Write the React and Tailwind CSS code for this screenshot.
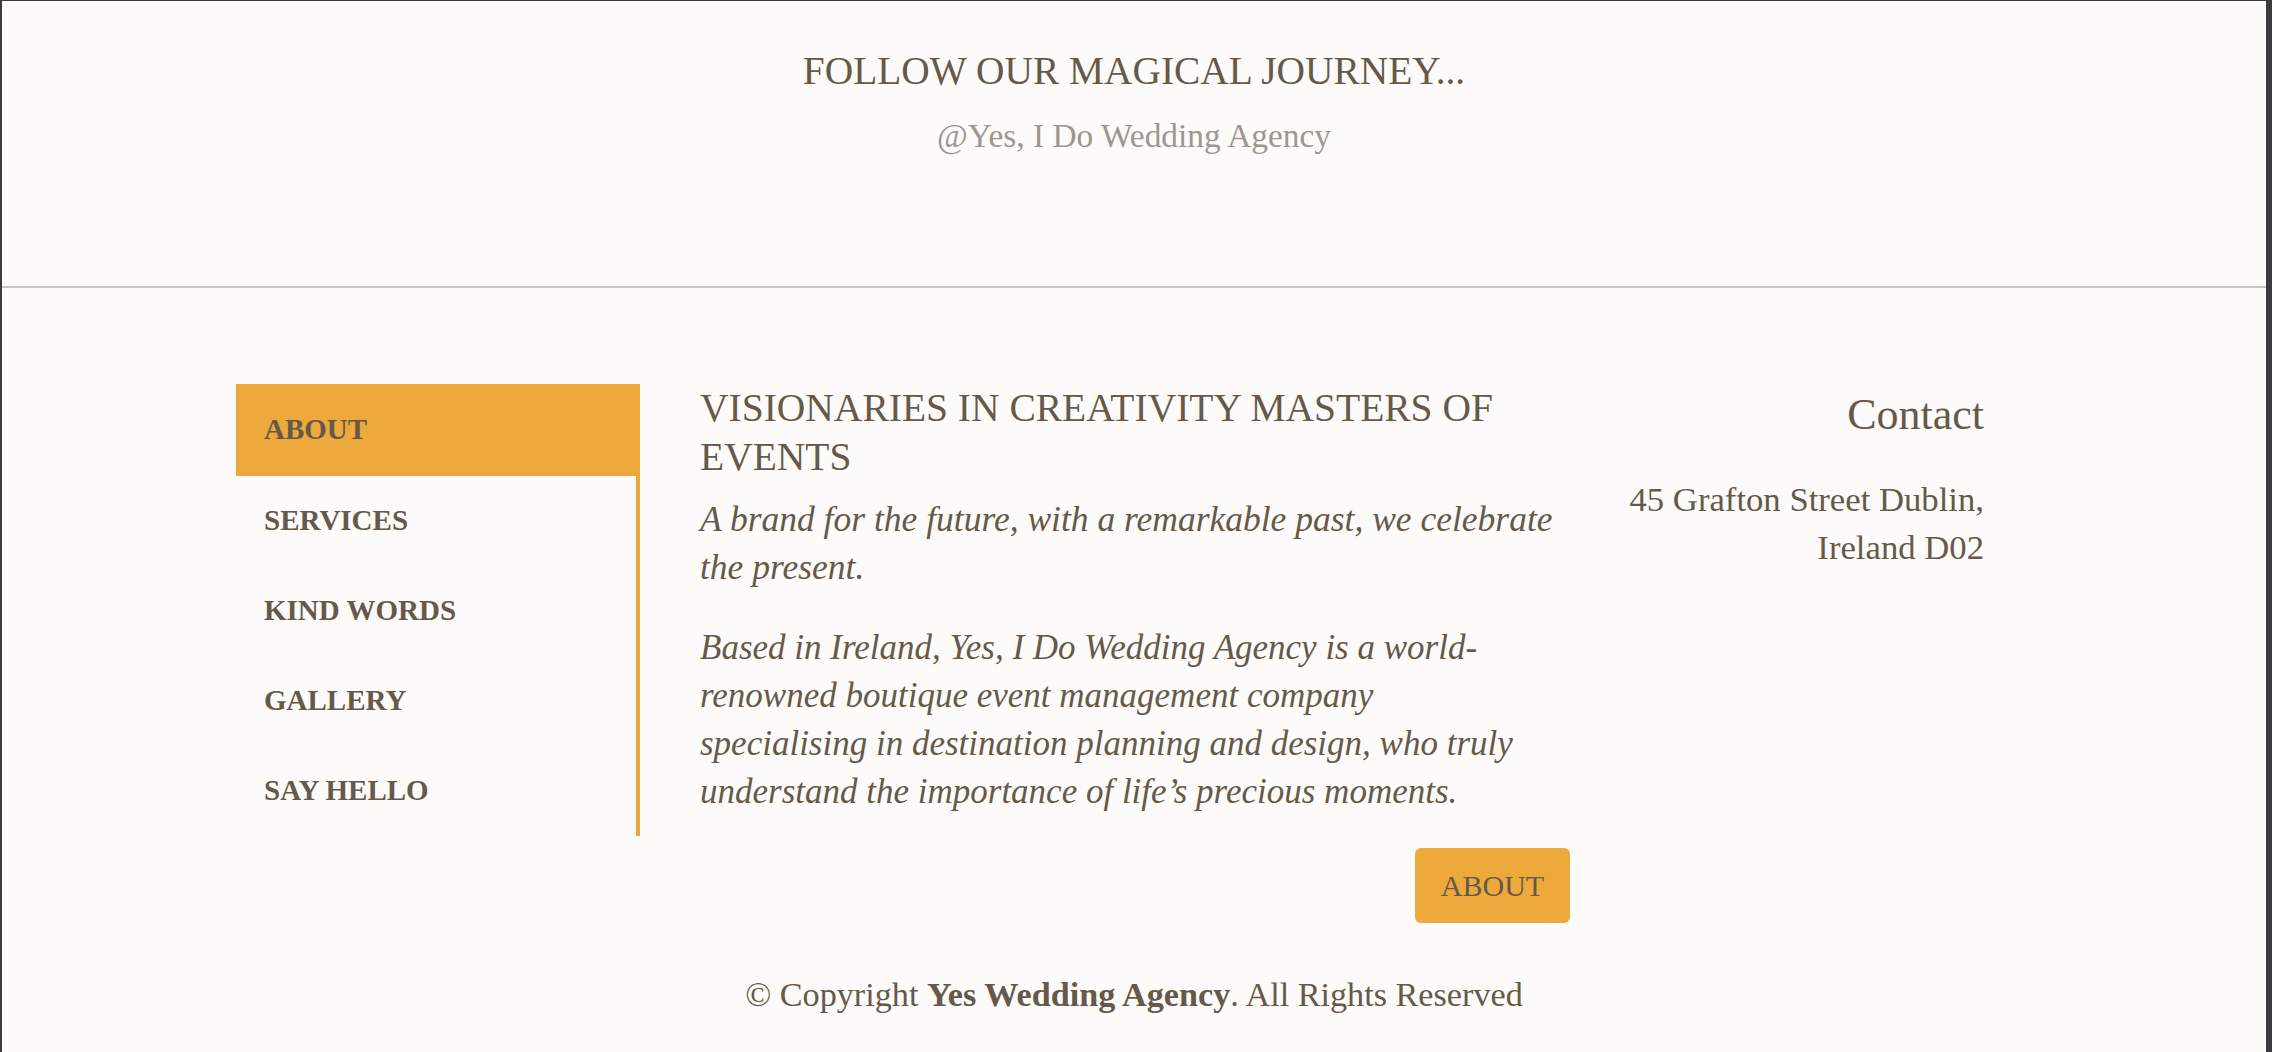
import React from 'react';

const navItems = ['ABOUT', 'SERVICES', 'KIND WORDS', 'GALLERY', 'SAY HELLO'];

const App = () => {
  const active = 'ABOUT';

  return (
    <div className="min-h-screen bg-[#fcfbf9] border-t border-l-2 border-r-[6px] border-[#3b3b3d] font-['Liberation_Serif',serif] text-[#66594a]">
      {/* Instagram strip */}
      <section className="h-[287px] pt-[47px] text-center border-b-2 border-[#c6c5c3]">
        <h2 className="text-[39.4px] leading-[1.2]">FOLLOW OUR MAGICAL JOURNEY...</h2>
        <p className="mt-[21px] text-[33.4px] leading-[1.2] text-[#9c978f]">@Yes, I Do Wedding Agency</p>
      </section>

      {/* Footer */}
      <footer className="pt-[96px]">
        <div className="flex pl-[234px] pr-[282px]">
          <nav className="w-[404px] shrink-0">
            {navItems.map((item) =>
              item === active ? (
                <div key={item} className="h-[92px] flex items-center pl-[28px] bg-[#eda93b] text-[29px] font-bold">
                  {item}
                </div>
              ) : (
                <div key={item} className="h-[90px] flex items-center pl-[28px] border-r-4 border-[#eda93b] text-[29px] font-bold">
                  {item}
                </div>
              )
            )}
          </nav>

          <div className="w-[870px] shrink-0 ml-[60px]">
            <h3 className="text-[39.5px] leading-[49px]">VISIONARIES IN CREATIVITY MASTERS OF EVENTS</h3>
            <p className="mt-[13px] text-[35.5px] leading-[48px] italic">
              A brand for the future, with a remarkable past, we celebrate the present.
            </p>
            <p className="mt-[33px] text-[35px] leading-[48px] italic">
              Based in Ireland, Yes, I Do Wedding Agency is a world-
              <br />
              renowned boutique event management company
              <br />
              specialising in destination planning and design, who truly
              <br />
              understand the importance of life’s precious moments.
            </p>
            <div className="flex justify-end mt-[32px]">
              <button className="w-[155px] h-[75px] rounded-md bg-[#eda93b] text-[30px] text-[#66594a]">
                ABOUT
              </button>
            </div>
          </div>

          <div className="flex-1 text-right pt-[5px]">
            <h4 className="text-[44px] leading-[1.2]">Contact</h4>
            <p className="mt-[34px] text-[34.7px] leading-[48px]">
              45 Grafton Street Dublin,
              <br />
              Ireland D02
            </p>
          </div>
        </div>

        <p className="pt-[47px] pb-[40px] text-center text-[34.2px] leading-[50px]">
          © Copyright <span className="font-bold">Yes Wedding Agency</span>. All Rights Reserved
        </p>
      </footer>
    </div>
  );
};

export default App;
